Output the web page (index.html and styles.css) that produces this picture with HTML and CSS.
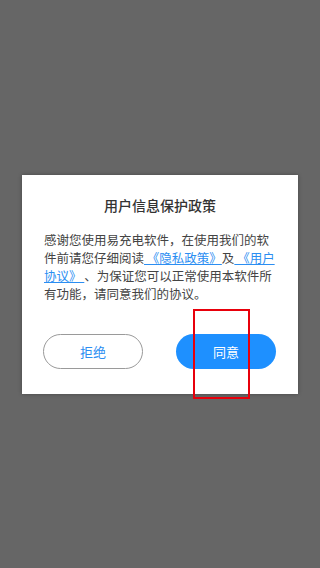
FILE: index.html
```html
<!DOCTYPE html>
<html lang="zh-CN">
<head>
    <meta charset="UTF-8">
    <title>用户信息保护政策</title>
    <link rel="stylesheet" href="styles.css">
</head>
<body>
    <div class="mask">
        <div class="dialog">
            <h2 class="dialog-title">用户信息保护政策</h2>
            <p class="dialog-text">感谢您使用易充电软件，在使用我们的软件前请您仔细阅读<a href="#"> 《隐私政策》</a>及<a href="#"> 《用户协议》 </a>、为保证您可以正常使用本软件所有功能，请同意我们的协议。</p>
            <div class="dialog-btns">
                <button class="btn btn-reject">拒绝</button>
                <button class="btn btn-agree">同意</button>
            </div>
        </div>
    </div>
    <div class="highlight"></div>
</body>
</html>
```

FILE: styles.css
```css
body {
    margin: 0;
    font-family: "Noto Sans CJK SC", "Noto Sans", sans-serif;
    background-color: #666666;
}
.mask {
    height: 100vh;
    display: flex;
    justify-content: center;
    align-items: center;
}
.dialog {
    width: 276px;
    background-color: #ffffff;
    box-shadow: 0 0 4px rgba(0, 0, 0, 0.3);
    padding: 20px 0 25px;
    box-sizing: border-box;
}
.dialog-title {
    margin: 0;
    font-size: 14px;
    line-height: 20px;
    font-weight: 500;
    color: #333333;
    text-align: center;
}
.dialog-text {
    margin: 16px 22px 0;
    font-size: 12.5px;
    line-height: 18px;
    color: #444444;
}
.dialog-text a {
    color: #2b8ef2;
    text-decoration: underline;
}
.dialog-btns {
    display: flex;
    justify-content: space-between;
    padding: 0 22px 0 21px;
    margin-top: 31px;
}
.btn {
    width: 100px;
    height: 35px;
    border-radius: 18px;
    font-family: inherit;
    font-size: 13px;
    cursor: pointer;
}
.btn-reject {
    background-color: #ffffff;
    border: 1px solid #9a9a9a;
    color: #2b8ef2;
}
.btn-agree {
    background-color: #1e90ff;
    border: none;
    color: #ffffff;
}
.highlight {
    position: absolute;
    left: 193px;
    top: 309px;
    width: 57px;
    height: 90px;
    box-sizing: border-box;
    border: 2px solid #e8000b;
}
```
